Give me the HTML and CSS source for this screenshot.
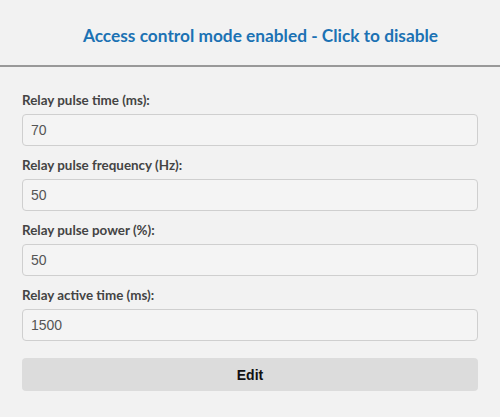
FILE: index.html
```html
<!DOCTYPE html>
<html>
<head>
<meta charset="utf-8">
<link rel="stylesheet" href="styles.css">
</head>
<body>
<header class="top">
  <a class="toggle">Access control mode enabled - Click to disable</a>
</header>
<main class="form">
  <div class="field">
    <label class="lbl">Relay pulse time (ms):</label>
    <input class="inp" type="text" value="70">
  </div>
  <div class="field">
    <label class="lbl">Relay pulse frequency (Hz):</label>
    <input class="inp" type="text" value="50">
  </div>
  <div class="field">
    <label class="lbl">Relay pulse power (%):</label>
    <input class="inp" type="text" value="50">
  </div>
  <div class="field">
    <label class="lbl">Relay active time (ms):</label>
    <input class="inp" type="text" value="1500">
  </div>
  <button class="btn">Edit</button>
</main>
</body>
</html>
```
FILE: styles.css
```css
html, body {
  margin: 0;
  padding: 0;
  background: #f2f2f2;
}
body {
  width: 500px;
  height: 417px;
  overflow: hidden;
}
.top {
  box-sizing: border-box;
  height: 67px;
  border-bottom: 2px solid #999;
  display: flex;
  justify-content: center;
}
.toggle {
  margin-top: 25px;
  margin-left: 21px;
  font-family: Lato, "Open Sans", sans-serif;
  font-weight: bold;
  font-size: 17.3px;
  line-height: 22px;
  color: #1c72b4;
  cursor: pointer;
}
.form {
  padding: 23px 22px 0 22px;
  display: flex;
  flex-direction: column;
}
.field {
  display: flex;
  flex-direction: column;
  margin-bottom: 9px;
}
.lbl {
  font-family: Lato, "Open Sans", sans-serif;
  font-weight: bold;
  font-size: 13.4px;
  line-height: 20px;
  color: #444;
  margin-bottom: 4px;
}
.inp {
  box-sizing: border-box;
  height: 32px;
  width: 456px;
  margin: 0;
  padding: 0 8px;
  border: 1px solid #cfcfcf;
  border-radius: 4px;
  background: #f4f4f4;
  font-family: "Liberation Sans", Arial, sans-serif;
  font-size: 14px;
  color: #555;
  outline: none;
}
.btn {
  margin-top: 8px;
  width: 456px;
  height: 33px;
  border: none;
  border-radius: 4px;
  background: #dcdcdc;
  font-family: "Liberation Sans", Arial, sans-serif;
  font-weight: bold;
  font-size: 14px;
  color: #111;
  padding: 0;
}
```
